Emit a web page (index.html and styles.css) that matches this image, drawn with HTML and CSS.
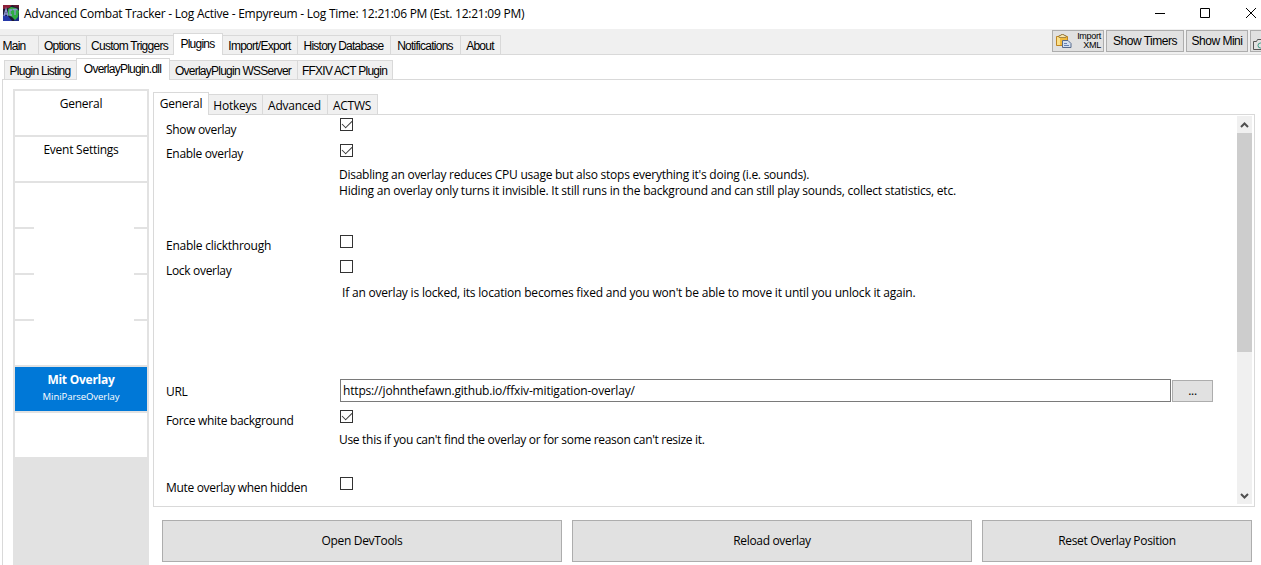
FILE: index.html
```
<!DOCTYPE html>
<html lang="en">
<head>
<meta charset="utf-8">
<title>Advanced Combat Tracker</title>
<link rel="stylesheet" href="styles.css">
</head>
<body>
<header class="titlebar">
  <svg class="app-icon" width="16" height="16" viewBox="0 0 16 16">
    <rect width="16" height="16" fill="#1c1a34"/>
    <path d="M0 0h9L6 3 0 4z" fill="#8c2038"/>
    <path d="M9 0h7v3l-4-1z" fill="#5a1c30"/>
    <path d="M0 10l5 1 4 5H0z" fill="#2538a8"/>
    <path d="M12 13l4-3v6h-5z" fill="#1d2c84"/>
    <path d="M5 4l3-2 5 1 3 3-1 6-3 3-3-3-4-2z" fill="#2fae42"/>
    <path d="M1 11l2-7 2 7M2 9h3M9 5H7v5h2M9.500 4.500h5M12 4.500V10" fill="none" stroke="#8d97cf" stroke-width="1.300"/>
  </svg>
  <h1 class="title">Advanced Combat Tracker - Log Active - Empyreum - Log Time: 12:21:06 PM (Est. 12:21:09 PM)</h1>
  <svg class="window-controls" width="102" height="12" viewBox="0 0 102 12" fill="none" stroke="#000">
    <path d="M0 6.500h10M45.500 1.500h9v9h-9z"/>
    <path d="M91 1l10 10M101 1L91 11"/>
  </svg>
</header>
<nav class="toolbar">
  <div class="tabs tabs-main">
    <span class="tab w38">Main</span><span class="tab w48">Options</span><span class="tab w87">Custom Triggers</span><span class="tab active w50">Plugins</span><span class="tab w74">Import/Export</span><span class="tab w93">History Database</span><span class="tab w70">Notifications</span><span class="tab last w41">About</span>
  </div>
  <div class="tools">
    <button class="btn import">
      <svg width="17" height="16" viewBox="0 0 17 16">
        <path d="M1.500 3.500h11v9h-11z" fill="#f0b93a" stroke="#bd8523"/>
        <path d="M2 4h3v8H2z" fill="#fbe08a"/>
        <path d="M4 4.500V2.500h2v-1h3v1h2v2z" fill="#f6e6ae" stroke="#94763a" stroke-width=".8"/>
        <path d="M7.500 7.500h5.500l3 3v4H7.500z" fill="#d3dff0" stroke="#566a8c"/>
        <path d="M9 10.500h3M9 12.500h5" stroke="#6480b0"/>
      </svg>
      <span class="import-text">Import<br>XML</span>
    </button>
    <button class="btn timers">Show Timers</button>
    <button class="btn mini">Show Mini</button>
    <button class="btn camera">
      <svg width="11" height="12" viewBox="0 0 11 12" fill="none" stroke="#555">
        <path d="M11 1.500H5.500l-1 2h-3v8H11"/><circle cx="8.500" cy="7.500" r="2.500" stroke="#3c9a86"/>
      </svg>
    </button>
  </div>
</nav>
<nav class="subbar">
  <div class="tabs tabs-plugin">
    <span class="tab w72">Plugin Listing</span><span class="tab active w94">OverlayPlugin.dll</span><span class="tab w127">OverlayPlugin WSServer</span><span class="tab last w96">FFXIV ACT Plugin</span>
  </div>
</nav>
<main class="page">
  <aside class="sidebar">
    <div class="item">General</div>
    <div class="item">Event Settings</div>
    <div class="item notch"></div>
    <div class="item notch"></div>
    <div class="item notch"></div>
    <div class="item"></div>
    <div class="item selected"><b>Mit Overlay</b><small>MiniParseOverlay</small></div>
    <div class="item"></div>
  </aside>
  <section class="content">
    <div class="tabs tabs-overlay">
      <span class="tab active w56">General</span><span class="tab w53">Hotkeys</span><span class="tab w65">Advanced</span><span class="tab last w51">ACTWS</span>
    </div>
    <div class="panel">
      <div class="form">
        <div class="row r-show"><label>Show overlay</label><i class="check on"></i></div>
        <div class="row r-enable"><label>Enable overlay</label><i class="check on"></i></div>
        <p class="note n-enable">Disabling an overlay reduces CPU usage but also stops everything it's doing (i.e. sounds).<br><span class="hiding">Hiding an overlay only turns it invisible. It still runs in the background and can still play sounds, collect statistics, etc.</span></p>
        <div class="row r-click"><label>Enable clickthrough</label><i class="check"></i></div>
        <div class="row r-lock"><label>Lock overlay</label><i class="check"></i></div>
        <p class="note n-lock">If an overlay is locked, its location becomes fixed and you won't be able to move it until you unlock it again.</p>
        <div class="row r-url"><label>URL</label><div class="url">https://johnthefawn.github.io/ffxiv-mitigation-overlay/</div><button class="btn browse">...</button></div>
        <div class="row r-force"><label>Force white background</label><i class="check on"></i></div>
        <p class="note n-force">Use this if you can't find the overlay or for some reason can't resize it.</p>
        <div class="row r-mute"><label>Mute overlay when hidden</label><i class="check"></i></div>
      </div>
      <div class="scrollbar">
        <svg width="15" height="17" viewBox="0 0 15 17"><path d="M4 11l3.500-3.500 3.500 3.500" fill="none" stroke="#505050" stroke-width="2"/></svg>
        <div class="thumb"></div>
        <svg width="15" height="17" viewBox="0 0 15 17"><path d="M4 7l3.500 3.500 3.500-3.500" fill="none" stroke="#505050" stroke-width="2"/></svg>
      </div>
    </div>
    <div class="actions">
      <button class="btn">Open DevTools</button>
      <button class="btn">Reload overlay</button>
      <button class="btn">Reset Overlay Position</button>
    </div>
  </section>
</main>
</body>
</html>
```
FILE: styles.css
```
* { box-sizing: border-box; }
body {
  margin: 0;
  width: 1261px;
  height: 565px;
  overflow: hidden;
  background: #fff;
  color: #000;
  font: 12px/16px "Open Sans", "Noto Sans", sans-serif;
  letter-spacing: -0.25px;
  white-space: nowrap;
}
svg { display: block; flex: none; }
.titlebar { height: 29px; display: flex; align-items: flex-start; padding: 5px 4px 0 3px; }
.title { margin: 1px 0 0 5px; flex: 1; font-size: 12px; font-weight: 400; letter-spacing: -0.245px; }
.window-controls { margin-top: 2px; }

.tabs { display: flex; align-items: flex-end; }
.tab {
  flex: none;
  height: 19px;
  border: 1px solid #d9d9d9;
  border-width: 1px 0 0 1px;
  background: #f0f0f0;
  text-align: center;
  line-height: 21px;
}
.tab.last { border-right-width: 1px; }
.tab.active { height: 22px; background: #fff; border-right-width: 1px; margin-bottom: -1px; line-height: 21px; }
.tab.active + .tab { border-left-width: 0; }
.w38 { width: 38px; } .w41 { width: 41px; } .w48 { width: 48px; } .w50 { width: 50px; }
.w51 { width: 51px; } .w53 { width: 53px; } .w56 { width: 56px; } .w65 { width: 65px; }
.w70 { width: 70px; } .w72 { width: 72px; } .w74 { width: 74px; } .w87 { width: 87px; }
.w93 { width: 93px; } .w94 { width: 94px; } .w96 { width: 96px; } .w127 { width: 127px; }

.toolbar, .subbar { display: flex; justify-content: space-between; border-bottom: 1px solid #d9d9d9; font-family: "Liberation Sans", Arial, sans-serif; font-size: 12px; letter-spacing: -0.75px; }
.toolbar { height: 26px; background: #f0f0f0; align-items: flex-end; }
.subbar { height: 25px; margin-left: 2px; padding-left: 2px; align-items: flex-end; }
.toolbar .tab, .subbar .tab { padding-right: 1px; }
.tabs-main .tab:first-child { border-left: 0; padding-right: 10px; }
.tools { display: flex; gap: 2px; align-self: flex-start; padding-top: 1px; }
.btn { display: flex; align-items: center; justify-content: center; padding: 0; border: 1px solid #adadad; background: #e1e1e1; color: #000; font: inherit; letter-spacing: inherit; }
.tools .btn { height: 22px; }
.import { width: 52px; gap: 5px; }
.import-text { font-size: 9px; line-height: 9px; text-align: right; letter-spacing: -0.3px; }
.timers { width: 78px; }
.mini { width: 62px; }
.camera { width: 11px; border-right: 0; overflow: hidden; padding: 5px 0 0 2px; }
.tools .timers, .tools .mini { letter-spacing: -0.5px; }

.page { height: 485px; margin-left: 2px; border-left: 1px solid #d9d9d9; display: flex; padding: 9px 0 0 10px; }
.sidebar { width: 136px; background: #e2e2e2; padding: 2px; display: flex; flex-direction: column; gap: 2px; }
.item { position: relative; height: 44px; background: #fff; text-align: center; padding-top: 5px; display: flex; flex-direction: column; flex: none; }
.notch::after { content: ""; position: absolute; left: 19px; top: 44px; width: 100px; height: 2px; background: #fff; }
.selected { background: #0078d7; color: #fff; }
.item small { font-size: 9.5px; letter-spacing: -0.05px; line-height: 18px; }

.content { flex: 1; padding: 3px 6px 0 4px; }
.tabs-overlay { height: 22px; letter-spacing: -0.25px; }
.tabs-overlay .tab { height: 20px; line-height: 21px; padding-right: 1px; }
.tabs-overlay .tab.active { height: 23px; line-height: 21px; position: relative; padding: 0; }
.panel { height: 393px; border: 1px solid #d9d9d9; display: flex; padding: 1px 2px; }
.form { flex: 1; padding-left: 10px; }
.row { display: flex; align-items: flex-start; height: 25px; }
.row label { width: 174px; padding-top: 5px; letter-spacing: -0.32px; }
.check { width: 13px; height: 13px; border: 1px solid #333; background: #fff; }
.on::after { content: ""; display: block; width: 9px; height: 5px; margin: 1px 0 0 1px; border: solid #333; border-width: 0 0 1.300px 1.300px; transform: rotate(-45deg) scale(.95); }
.row .check { margin-top: 2px; }
.note { margin: 0 0 0 173px; }
.r-show { height: 26px; }
.r-show label { padding-top: 6px; }
.r-enable label { padding-top: 4px; }
.r-click label { letter-spacing: -0.25px; }
.n-enable { height: 66px; }
.hiding { letter-spacing: -0.215px; }
.r-lock { height: 27px; }
.n-lock { margin-left: 176px; height: 94px; letter-spacing: -0.195px; }
.r-url { height: 29px; }
.url { width: 831px; height: 23px; border: 1px solid #7a7a7a; padding: 3px 2px; margin-right: 1px; letter-spacing: -0.17px; }
.browse { width: 41px; height: 22px; margin-top: 1px; }
.r-force { height: 24px; }
.r-force label { padding-top: 5px; }
.n-force { height: 43px; letter-spacing: -0.3px; }
.scrollbar { width: 15px; height: 388px; background: #f0f0f0; display: flex; flex-direction: column; }
.thumb { height: 219px; background: #cdcdcd; margin-bottom: auto; }
.actions { display: grid; grid-template-columns: 400px 400px 270px; gap: 10px; padding: 13px 0 0 9px; letter-spacing: -0.33px; }
.actions .btn { height: 42px; }
```
